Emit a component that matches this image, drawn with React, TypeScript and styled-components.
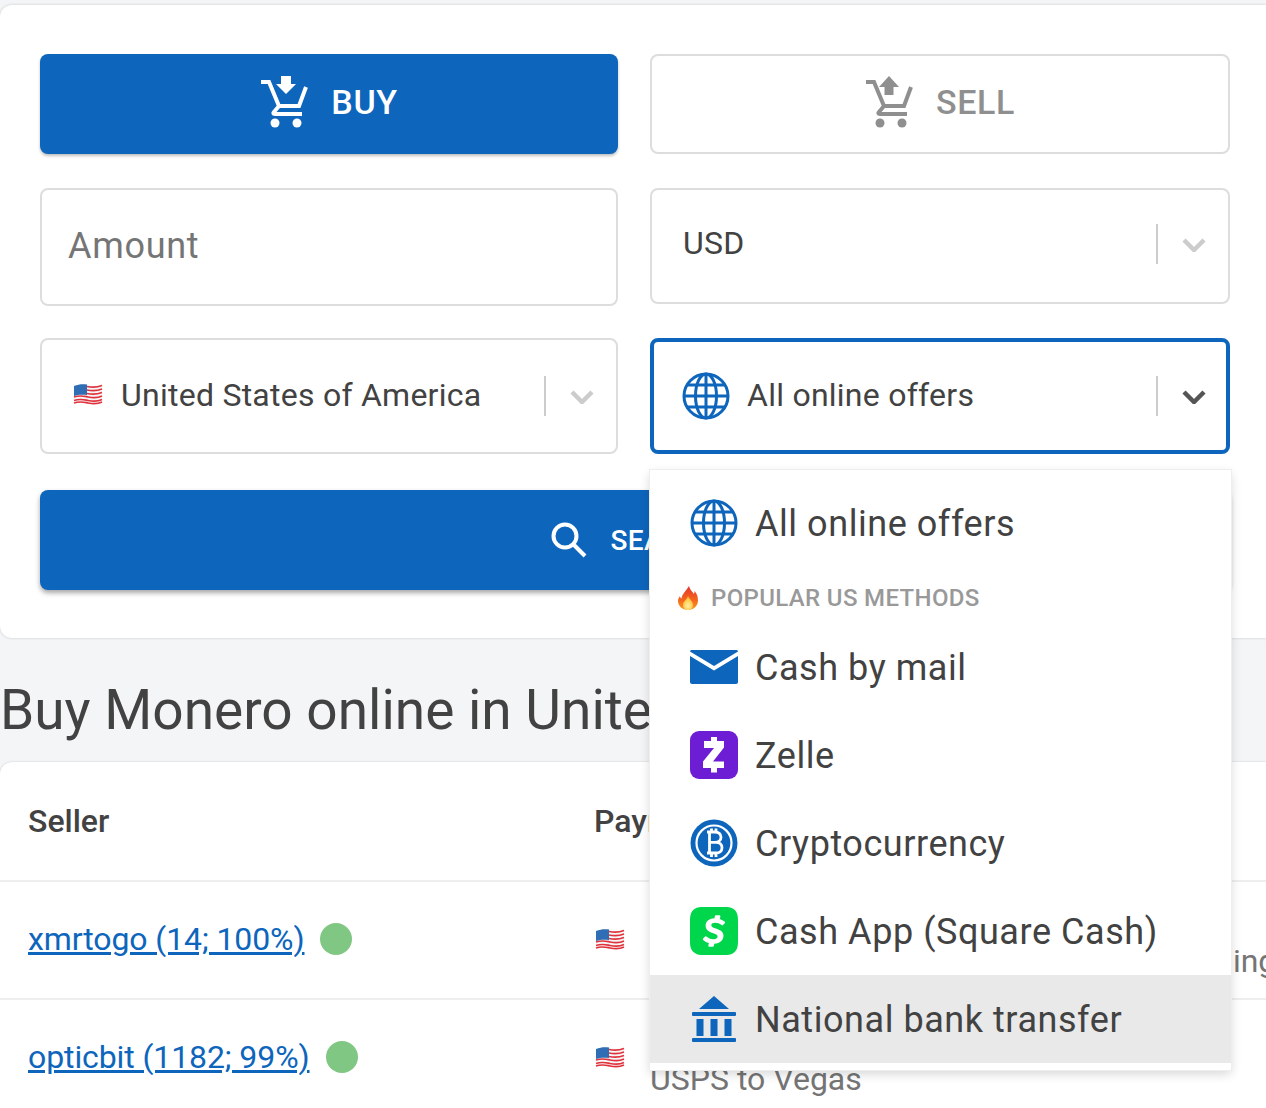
import { SiCashapp } from 'react-icons/si'
import styled, { createGlobalStyle } from 'styled-components'

const BLUE = '#0d65bc'

const GlobalStyle = createGlobalStyle`
	html, body {
		margin: 0;
		height: 1108px;
		overflow: hidden;
		background: #f4f5f7;
		font-family: Roboto, 'Liberation Sans', sans-serif;
		color: #424242;
	}
`

function CartIcon({ up }: { up?: boolean }) {
	return (
		<svg width="48" height="52" viewBox="0 0 48 52" fill="none">
			<path
				d="M1 6h8l10 24h20l7-19M19 30l-5 6c-1 1-1 2 1 2h27"
				stroke="currentColor"
				strokeWidth="4"
			/>
			{up ? (
				<path d="M24 0l10 11h-5.500v8h-9v-8h-5.500z" fill="currentColor" />
			) : (
				<path d="M21 0h10v8h5L26 18 16 8h5z" fill="currentColor" />
			)}
			<circle cx="15" cy="47" r="4.500" fill="currentColor" />
			<circle cx="37" cy="47" r="4.500" fill="currentColor" />
		</svg>
	)
}

function Chevron() {
	return (
		<svg width="24" height="14" viewBox="0 0 24 14" fill="none">
			<path d="M2 2l10 10L22 2" stroke="currentColor" strokeWidth="4.500" />
		</svg>
	)
}

function GlobeIcon() {
	return (
		<svg width="48" height="48" viewBox="0 0 48 48" fill="none" stroke={BLUE} strokeWidth="3">
			<circle cx="24" cy="24" r="22" />
			<ellipse cx="24" cy="24" rx="10.500" ry="22" />
			<path d="M24 2v44M2 24h44M5 13h38M5 35h38" />
		</svg>
	)
}

function SearchIcon() {
	return (
		<svg width="36" height="36" viewBox="0 0 36 36" fill="none" stroke="#fff" strokeWidth="4">
			<circle cx="14" cy="14" r="11.500" />
			<path d="M22 22l12 12" />
		</svg>
	)
}

function FlagIcon() {
	return (
		<svg width="30" height="22" viewBox="0 0 30 22" fill="none">
			<path d="M1 3c6-3 10-2 15-1s9 1 13-1v17c-5 2-9 2-14 1S6 18 1 20z" fill="#f6f6f6" />
			<g stroke="#e0323c" strokeWidth="1.700">
				<path d="M14 3.500c5 1 10 1 15-1" />
				<path d="M14 7c5 1 10 1 15-1" />
				<path d="M14 10.500c5 1 10 1 15-1" />
				<path d="M1 14c6-2 9-1 14 0s10 1 14-1" />
				<path d="M1 17.500c6-2 9-1 14 0s10 1 14-1" />
				<path d="M1 20c6-2 9-1 14 0s10 1 14-1" />
			</g>
			<path d="M1 3c5-2 9-2 13-1.500v10.500c-5-.5-9-.5-13 1z" fill="#2f6db5" />
		</svg>
	)
}

function FlameIcon() {
	return (
		<svg width="22" height="24" viewBox="0 0 22 24">
			<defs>
				<linearGradient id="flame" x1="0" y1="0" x2="0" y2="1">
					<stop offset="0" stopColor="#e5322b" />
					<stop offset="0.6" stopColor="#f4691e" />
					<stop offset="1" stopColor="#fb9a1e" />
				</linearGradient>
				<radialGradient id="flameCore" cx="0.5" cy="0.7" r="0.6">
					<stop offset="0" stopColor="#fff3a8" />
					<stop offset="1" stopColor="#fdb92c" />
				</radialGradient>
			</defs>
			<path
				d="M12 0c1 4 3 5 5 8 .5-1 .5-2 .5-3 3 3 3.500 7 3.500 9.500C21 20 16.500 24 11 24S1 20 1 15c0-2 1-3.500 2-5 0 1 .5 2 1.500 2.500C5 8 9 5 12 0z"
				fill="url(#flame)"
			/>
			<path d="M11 10c1 3 5 5 5 9 0 3-2 5-5 5s-5-2-5-5c0-4 4-5 5-9z" fill="url(#flameCore)" />
		</svg>
	)
}

function MailIcon() {
	return (
		<svg width="48" height="34" viewBox="0 0 48 34">
			<path d="M2 0h44c1 0 2 .5 2 1.500L24 16 0 1.500C0 .5 1 0 2 0z" fill={BLUE} />
			<path d="M0 6l24 14.500L48 6v26c0 1-1 2-2 2H2c-1 0-2-1-2-2z" fill={BLUE} />
		</svg>
	)
}

function ZelleIcon() {
	return (
		<svg width="48" height="48" viewBox="0 0 48 48">
			<rect width="48" height="48" rx="9" fill="#6d1ed4" />
			<path
				d="M21 6h6v4h7v6.500L23 30.500h11V37h-7v4.500h-6V37h-8v-6.500L24 17H14v-7h7z"
				fill="#fff"
			/>
		</svg>
	)
}

function BitcoinIcon() {
	return (
		<svg width="48" height="48" viewBox="0 0 48 48" fill="none">
			<circle cx="24" cy="24" r="23.500" fill={BLUE} />
			<circle cx="24" cy="24" r="17.500" stroke="#fff" strokeWidth="2.200" />
			<path
				d="M17 13h8c3.500 0 6 2 6 5.300 0 3-2.500 5-6 5h-5.500M19.500 23.300H26c3.700 0 6 2.200 6 5.400 0 3.300-2.500 5.300-6 5.300h-9M19.500 13v21M21.500 9.500V13M26 9.500V13M21.500 34v4M26 34v4"
				stroke="#fff"
				strokeWidth="2.800"
			/>
		</svg>
	)
}

function BankIcon() {
	return (
		<svg width="44" height="46" viewBox="0 0 44 46" fill={BLUE}>
			<path d="M22 0l15 13H7z" />
			<rect x="0" y="16" width="44" height="4" rx="1" />
			<rect x="4.500" y="23" width="7" height="17" />
			<rect x="18.500" y="23" width="7" height="17" />
			<rect x="32.500" y="23" width="7" height="17" />
			<rect x="0" y="42" width="44" height="4" rx="1" />
		</svg>
	)
}

function App() {
	return (
		<Page>
			<GlobalStyle />
			<FilterCard>
				<FormRow $mb={34}>
					<TradeButton $active>
						<CartIcon />
						BUY
					</TradeButton>
					<TradeButton>
						<CartIcon up />
						SELL
					</TradeButton>
				</FormRow>
				<FormRow $mb={32}>
					<AmountInput placeholder="Amount" />
					<Select $raised>
						<SelectValue>USD</SelectValue>
						<Separator />
						<Arrow>
							<Chevron />
						</Arrow>
					</Select>
				</FormRow>
				<FormRow $mb={36}>
					<Select>
						<FlagSlot>
							<FlagIcon />
						</FlagSlot>
						<SelectValue>United States of America</SelectValue>
						<Separator />
						<Arrow>
							<Chevron />
						</Arrow>
					</Select>
					<Select $focused>
						<GlobeIcon />
						<SelectValue>All online offers</SelectValue>
						<Separator />
						<Arrow $dark>
							<Chevron />
						</Arrow>
						<Menu>
							<MenuItem>
								<IconSlot>
									<GlobeIcon />
								</IconSlot>
								All online offers
							</MenuItem>
							<MenuHeading>
								<FlameIcon />
								POPULAR US METHODS
							</MenuHeading>
							<MenuItem>
								<IconSlot>
									<MailIcon />
								</IconSlot>
								Cash by mail
							</MenuItem>
							<MenuItem>
								<IconSlot>
									<ZelleIcon />
								</IconSlot>
								Zelle
							</MenuItem>
							<MenuItem>
								<IconSlot>
									<BitcoinIcon />
								</IconSlot>
								Cryptocurrency
							</MenuItem>
							<MenuItem>
								<IconSlot>
									<SiCashapp size={48} color="#00d64b" />
								</IconSlot>
								Cash App (Square Cash)
							</MenuItem>
							<MenuItem $highlight>
								<IconSlot>
									<BankIcon />
								</IconSlot>
								National bank transfer
							</MenuItem>
						</Menu>
					</Select>
				</FormRow>
				<SearchButton>
					<SearchIcon />
					SEARCH
				</SearchButton>
			</FilterCard>
			<Title>Buy Monero online in United States of America</Title>
			<TableCard>
				<HeadRow>
					<HeadCell>Seller</HeadCell>
					<HeadCell>Payment method</HeadCell>
				</HeadRow>
				<Row>
					<SellerCell>
						<SellerLink href="#">xmrtogo (14; 100%)</SellerLink>
						<Dot />
					</SellerCell>
					<PayCell>
						<FlagIcon />
						<PayText>
							<PayName>Cash by mail</PayName>
							<PayNote>Cash in mail via USPS Priority Mail, Shipping</PayNote>
						</PayText>
					</PayCell>
				</Row>
				<Row>
					<SellerCell>
						<SellerLink href="#">opticbit (1182; 99%)</SellerLink>
						<Dot />
					</SellerCell>
					<PayCell>
						<FlagIcon />
						<PayText>
							<PayName>Cash by mail</PayName>
							<PayNote>USPS to Vegas</PayNote>
						</PayText>
					</PayCell>
				</Row>
			</TableCard>
		</Page>
	)
}

export default App

const Page = styled.div`
	width: 1266px;
	height: 1108px;
	padding-top: 5px;
	box-sizing: border-box;
	overflow: hidden;
`
const FilterCard = styled.div`
	background: #fff;
	border-radius: 12px 0 0 12px;
	box-shadow: 0 0 3px rgba(0, 0, 0, 0.18);
	padding: 49px 36px 48px 40px;
`
const FormRow = styled.div<{ $mb: number }>`
	display: grid;
	grid-template-columns: 578px 580px;
	column-gap: 32px;
	align-items: start;
	margin-bottom: ${(p) => p.$mb}px;
`
const TradeButton = styled.button<{ $active?: boolean }>`
	height: 100px;
	box-sizing: border-box;
	padding: 0 0 4px;
	display: flex;
	align-items: center;
	justify-content: center;
	gap: 23px;
	border-radius: 8px;
	border: ${(p) => (p.$active ? 'none' : '2px solid #ddd')};
	background: ${(p) => (p.$active ? BLUE : '#fff')};
	color: ${(p) => (p.$active ? '#fff' : '#8f8f8f')};
	box-shadow: ${(p) => (p.$active ? '0 2px 3px rgba(0, 0, 0, 0.25)' : 'none')};
	font: 500 34px Roboto, sans-serif;
	letter-spacing: 0.6px;
`
const AmountInput = styled.input`
	height: 118px;
	box-sizing: border-box;
	border: 2px solid #ddd;
	border-radius: 8px;
	padding: 0 26px 2px;
	font: 400 36px Roboto, sans-serif;
	letter-spacing: 0.7px;
	outline: none;
	&::placeholder {
		color: #757575;
		opacity: 1;
	}
`
const Select = styled.div<{ $focused?: boolean; $raised?: boolean }>`
	position: relative;
	height: 116px;
	box-sizing: border-box;
	display: flex;
	align-items: center;
	padding: ${(p) => (p.$focused ? '0 20px 0 28px' : '0 22px 0 30px')};
	padding-bottom: ${(p) => (p.$raised ? '4px' : '0')};
	border: ${(p) => (p.$focused ? `4px solid ${BLUE}` : '2px solid #ddd')};
	border-radius: 8px;
	background: #fff;
`
const SelectValue = styled.div`
	flex: 1;
	padding-left: 17px;
	margin-top: -2px;
	font-size: 32px;
	letter-spacing: 0.25px;
	&:first-child {
		padding-left: 1px;
	}
`
const FlagSlot = styled.div`
	display: flex;
	margin: -4px 1px 0 1px;
`
const Separator = styled.div`
	width: 2px;
	height: 40px;
	background: #ccc;
`
const Arrow = styled.div<{ $dark?: boolean }>`
	display: flex;
	margin: 2px 0 0 24px;
	color: ${(p) => (p.$dark ? '#555' : '#ccc')};
`
const Menu = styled.div`
	position: absolute;
	z-index: 5;
	top: 128px;
	left: -4px;
	width: 581px;
	height: 600px;
	box-sizing: border-box;
	padding-top: 9px;
	background: #fff;
	box-shadow: 0 0 0 1px #eee, 0 4px 10px rgba(0, 0, 0, 0.16);
`
const MenuItem = styled.div<{ $highlight?: boolean }>`
	height: 88px;
	box-sizing: border-box;
	padding: 2px 0 0 40px;
	display: flex;
	align-items: center;
	font-size: 36px;
	letter-spacing: 0.55px;
	background: ${(p) => (p.$highlight ? '#e9e9e9' : 'transparent')};
`
const IconSlot = styled.div`
	width: 48px;
	display: flex;
	justify-content: center;
	margin: -3px 17px 0 0;
`
const MenuHeading = styled.div`
	height: 56px;
	box-sizing: border-box;
	padding: 6px 0 0 27px;
	display: flex;
	align-items: center;
	gap: 12px;
	font-size: 24px;
	font-weight: 500;
	letter-spacing: 0.35px;
	color: #999;
`
const SearchButton = styled.button`
	width: 1190px;
	height: 100px;
	display: flex;
	align-items: center;
	justify-content: center;
	gap: 24px;
	border: none;
	border-radius: 8px;
	background: ${BLUE};
	color: #fff;
	box-shadow: 0 3px 5px rgba(0, 0, 0, 0.35);
	font: 500 28px Roboto, sans-serif;
	letter-spacing: 0.3px;
`
const Title = styled.h1`
	margin: 0;
	height: 124px;
	line-height: 144px;
	font-size: 55px;
	font-weight: 400;
	white-space: nowrap;
`
const TableCard = styled.div`
	background: #fff;
	border-radius: 12px 0 0 0;
	box-shadow: 0 0 2px rgba(0, 0, 0, 0.2);
`
const HeadRow = styled.div`
	height: 120px;
	display: grid;
	grid-template-columns: 595px 1fr;
	align-items: center;
	border-bottom: 2px solid #eee;
	box-sizing: border-box;
`
const HeadCell = styled.div`
	font-size: 32px;
	font-weight: 500;
	white-space: nowrap;
	margin-left: -1px;
	&:first-child {
		margin-left: 0;
		padding-left: 28px;
	}
`
const Row = styled.div`
	height: 118px;
	padding-bottom: 2px;
	display: grid;
	grid-template-columns: 595px 1fr;
	align-items: center;
	border-bottom: 2px solid #eee;
	box-sizing: border-box;
`
const SellerCell = styled.div`
	display: flex;
	align-items: center;
	gap: 16px;
	padding-left: 28px;
`
const SellerLink = styled.a`
	font-size: 32px;
	letter-spacing: -0.1px;
	color: ${BLUE};
	white-space: nowrap;
`
const Dot = styled.span`
	width: 32px;
	height: 32px;
	border-radius: 50%;
	background: #81c784;
`
const PayCell = styled.div`
	display: flex;
	align-items: center;
	gap: 25px;
`
const PayText = styled.div`
	font-size: 32px;
	white-space: nowrap;
	line-height: 44px;
`
const PayName = styled.div``
const PayNote = styled.div`
	color: #757575;
`
